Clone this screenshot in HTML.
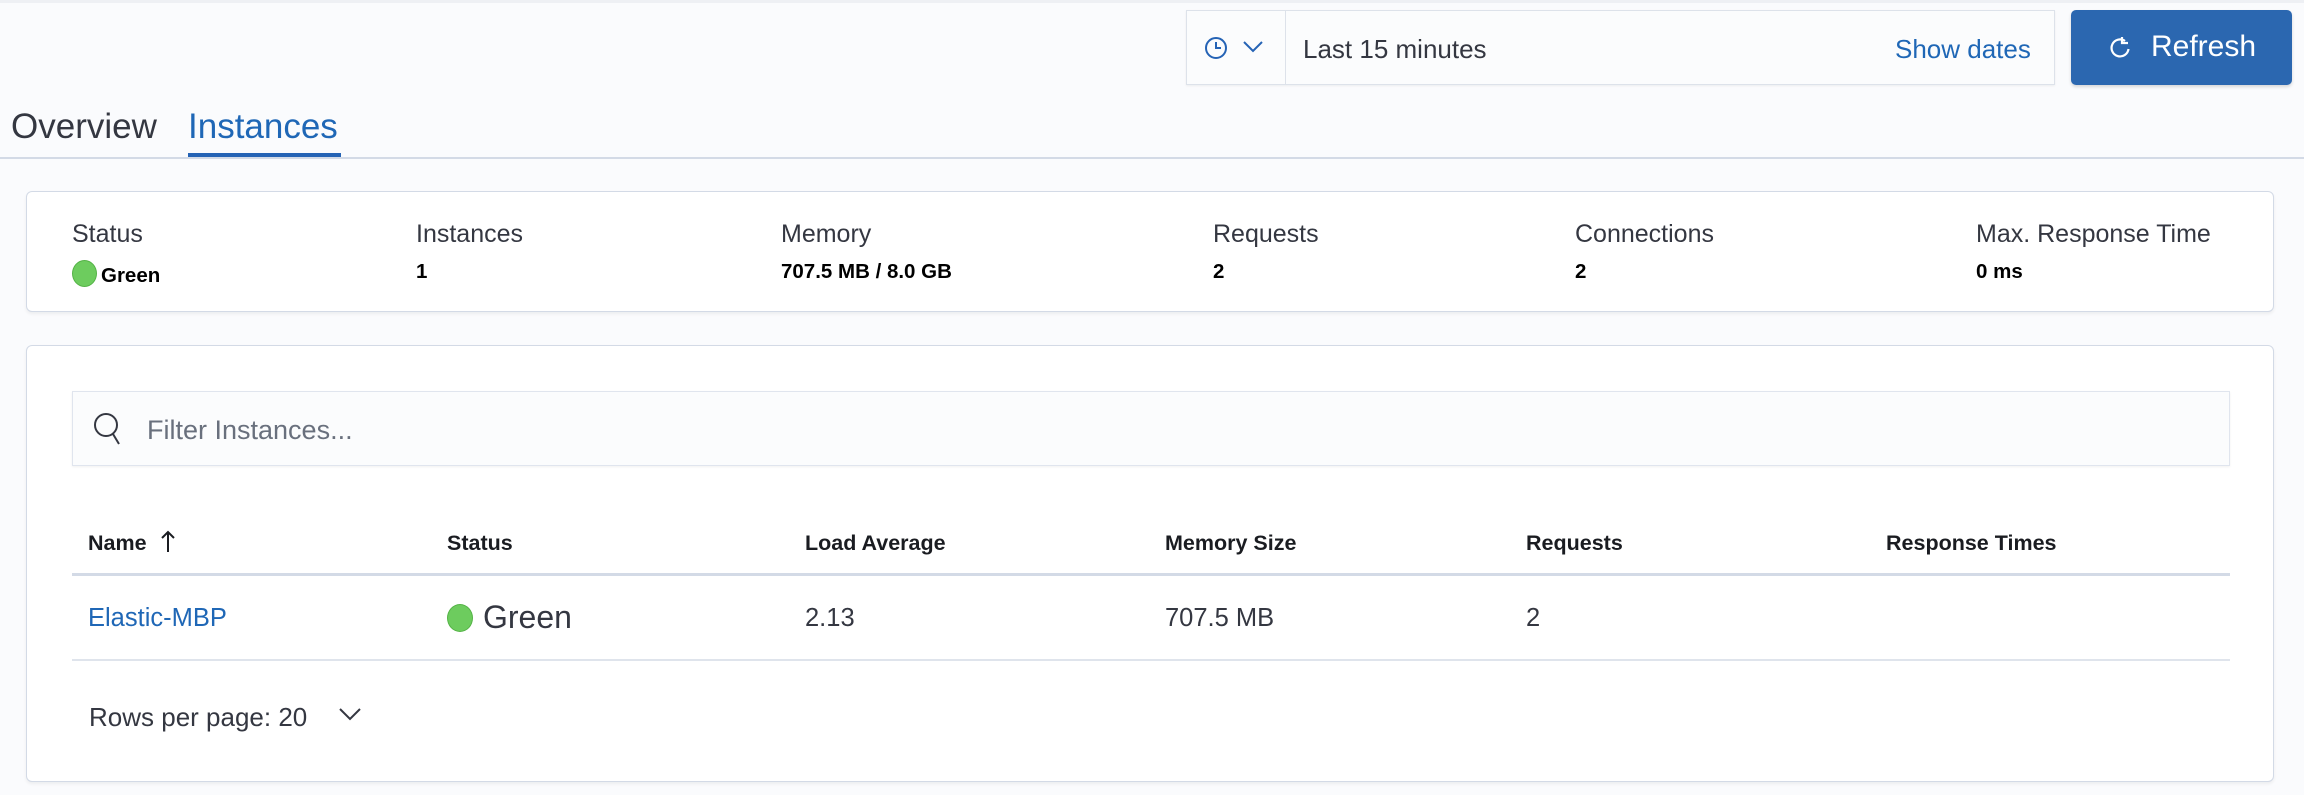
<!DOCTYPE html>
<html><head><meta charset="utf-8"><style>
*{box-sizing:border-box;margin:0;padding:0}
body{width:2304px;height:795px;background:#fafbfd;font-family:"Liberation Sans",sans-serif;color:#343741;position:relative;overflow:hidden}
.a{position:absolute;white-space:nowrap}
.panel{position:absolute;background:#fff;border:1px solid #d3dae6;border-radius:6px;box-shadow:0 2px 3px rgba(0,0,0,.06)}
.lbl{font-size:25px;color:#343741}
.val{font-size:20.5px;font-weight:bold;color:#000}
.th{font-size:21.5px;font-weight:bold;color:#1a1c21}
.td{font-size:25.5px;color:#343741}
.dot{display:inline-block;border-radius:50%;background:#6dcc5e;border:1px solid #54b346}
</style></head><body>
<div class="a" style="left:0;top:0;width:2304px;height:3px;background:#eef0f4"></div>
<div class="a" style="left:1186px;top:10px;width:869px;height:75px;background:#fbfcfd;border:1px solid #dde2ea;box-shadow:0 1px 2px rgba(0,0,0,.06)"></div>
<div class="a" style="left:1285px;top:11px;width:1px;height:73px;background:#dde2ea"></div>
<svg class="a" style="left:1204px;top:36px" width="24" height="24" viewBox="0 0 24 24"><circle cx="12" cy="12" r="10" fill="none" stroke="#2563b5" stroke-width="2"/><path d="M12 6v6h5" fill="none" stroke="#2563b5" stroke-width="2"/></svg>
<svg class="a" style="left:1242px;top:40px" width="22" height="14" viewBox="0 0 22 14"><path d="M2 2l9 9 9-9" fill="none" stroke="#2563b5" stroke-width="2"/></svg>
<div class="a" style="left:1303px;top:34px;font-size:26px;color:#343741">Last 15 minutes</div>
<div class="a" style="left:1895px;top:34px;font-size:26px;color:#1f67b6">Show dates</div>
<div class="a" style="left:2071px;top:10px;width:221px;height:75px;background:#2b67b0;border-radius:5px;box-shadow:0 2px 3px rgba(0,0,0,.15)"></div>
<svg class="a" style="left:2108px;top:35px" width="24" height="26" viewBox="0 0 24 26"><path d="M17 6A8.5 8.5 0 1 0 20.5 14" fill="none" stroke="#fff" stroke-width="2.2"/><path d="M14 2v6h6" fill="none" stroke="#fff" stroke-width="2.2"/></svg>
<div class="a" style="left:2151px;top:30px;font-size:30px;color:#fff">Refresh</div>
<div class="a" style="left:11px;top:107px;font-size:35px;color:#343741">Overview</div>
<div class="a" style="left:188px;top:107px;font-size:35px;color:#1f67b6">Instances</div>
<div class="a" style="left:188px;top:153px;width:153px;height:4px;background:#2563b5"></div>
<div class="a" style="left:0;top:157px;width:2304px;height:2px;background:#d3dae6"></div>
<div class="panel" style="left:26px;top:191px;width:2248px;height:121px"></div>
<div class="a lbl" style="left:72px;top:220px">Status</div>
<div class="a val" style="left:72px;top:260px"><span class="dot" style="width:25px;height:27px;vertical-align:-5px;margin-right:4px"></span>Green</div>
<div class="a lbl" style="left:416px;top:220px">Instances</div><div class="a val" style="left:416px;top:260px">1</div>
<div class="a lbl" style="left:781px;top:220px">Memory</div><div class="a val" style="left:781px;top:260px">707.5 MB / 8.0 GB</div>
<div class="a lbl" style="left:1213px;top:220px">Requests</div><div class="a val" style="left:1213px;top:260px">2</div>
<div class="a lbl" style="left:1575px;top:220px">Connections</div><div class="a val" style="left:1575px;top:260px">2</div>
<div class="a lbl" style="left:1976px;top:220px">Max. Response Time</div><div class="a val" style="left:1976px;top:260px">0 ms</div>
<div class="panel" style="left:26px;top:345px;width:2248px;height:437px"></div>
<div class="a" style="left:72px;top:391px;width:2158px;height:75px;background:#fbfcfd;border:1px solid #e0e5ee;box-shadow:0 1px 2px rgba(0,0,0,.06)"></div>
<svg class="a" style="left:93px;top:411px" width="32" height="36" viewBox="0 0 32 36"><circle cx="13" cy="14" r="11" fill="none" stroke="#343741" stroke-width="2"/><path d="M20 23l6 10" stroke="#343741" stroke-width="2"/></svg>
<div class="a" style="left:147px;top:415px;font-size:27px;color:#69707d">Filter Instances...</div>
<div class="a th" style="left:88px;top:531px">Name</div>
<svg class="a" style="left:160px;top:530px" width="16" height="24" viewBox="0 0 16 24"><path d="M8 2v20M2 8l6-6 6 6" fill="none" stroke="#1a1c21" stroke-width="2"/></svg>
<div class="a th" style="left:447px;top:531px">Status</div>
<div class="a th" style="left:805px;top:531px">Load Average</div>
<div class="a th" style="left:1165px;top:531px">Memory Size</div>
<div class="a th" style="left:1526px;top:531px">Requests</div>
<div class="a th" style="left:1886px;top:531px">Response Times</div>
<div class="a" style="left:72px;top:573px;width:2158px;height:3px;background:#d3dae6"></div>
<div class="a td" style="left:88px;top:604px;color:#1f67b6">Elastic-MBP</div>
<div class="a" style="left:447px;top:599px;font-size:32px;color:#343741"><span class="dot" style="width:26px;height:28px;vertical-align:-4px;margin-right:10px"></span>Green</div>
<div class="a td" style="left:805px;top:604px">2.13</div>
<div class="a td" style="left:1165px;top:604px">707.5 MB</div>
<div class="a td" style="left:1526px;top:604px">2</div>
<div class="a" style="left:72px;top:659px;width:2158px;height:2px;background:#dfe4ec"></div>
<div class="a" style="left:89px;top:702px;font-size:26px;color:#343741">Rows per page: 20</div>
<svg class="a" style="left:338px;top:706px" width="24" height="16" viewBox="0 0 24 16"><path d="M2 3l10 10 10-10" fill="none" stroke="#343741" stroke-width="2"/></svg>
</body></html>
